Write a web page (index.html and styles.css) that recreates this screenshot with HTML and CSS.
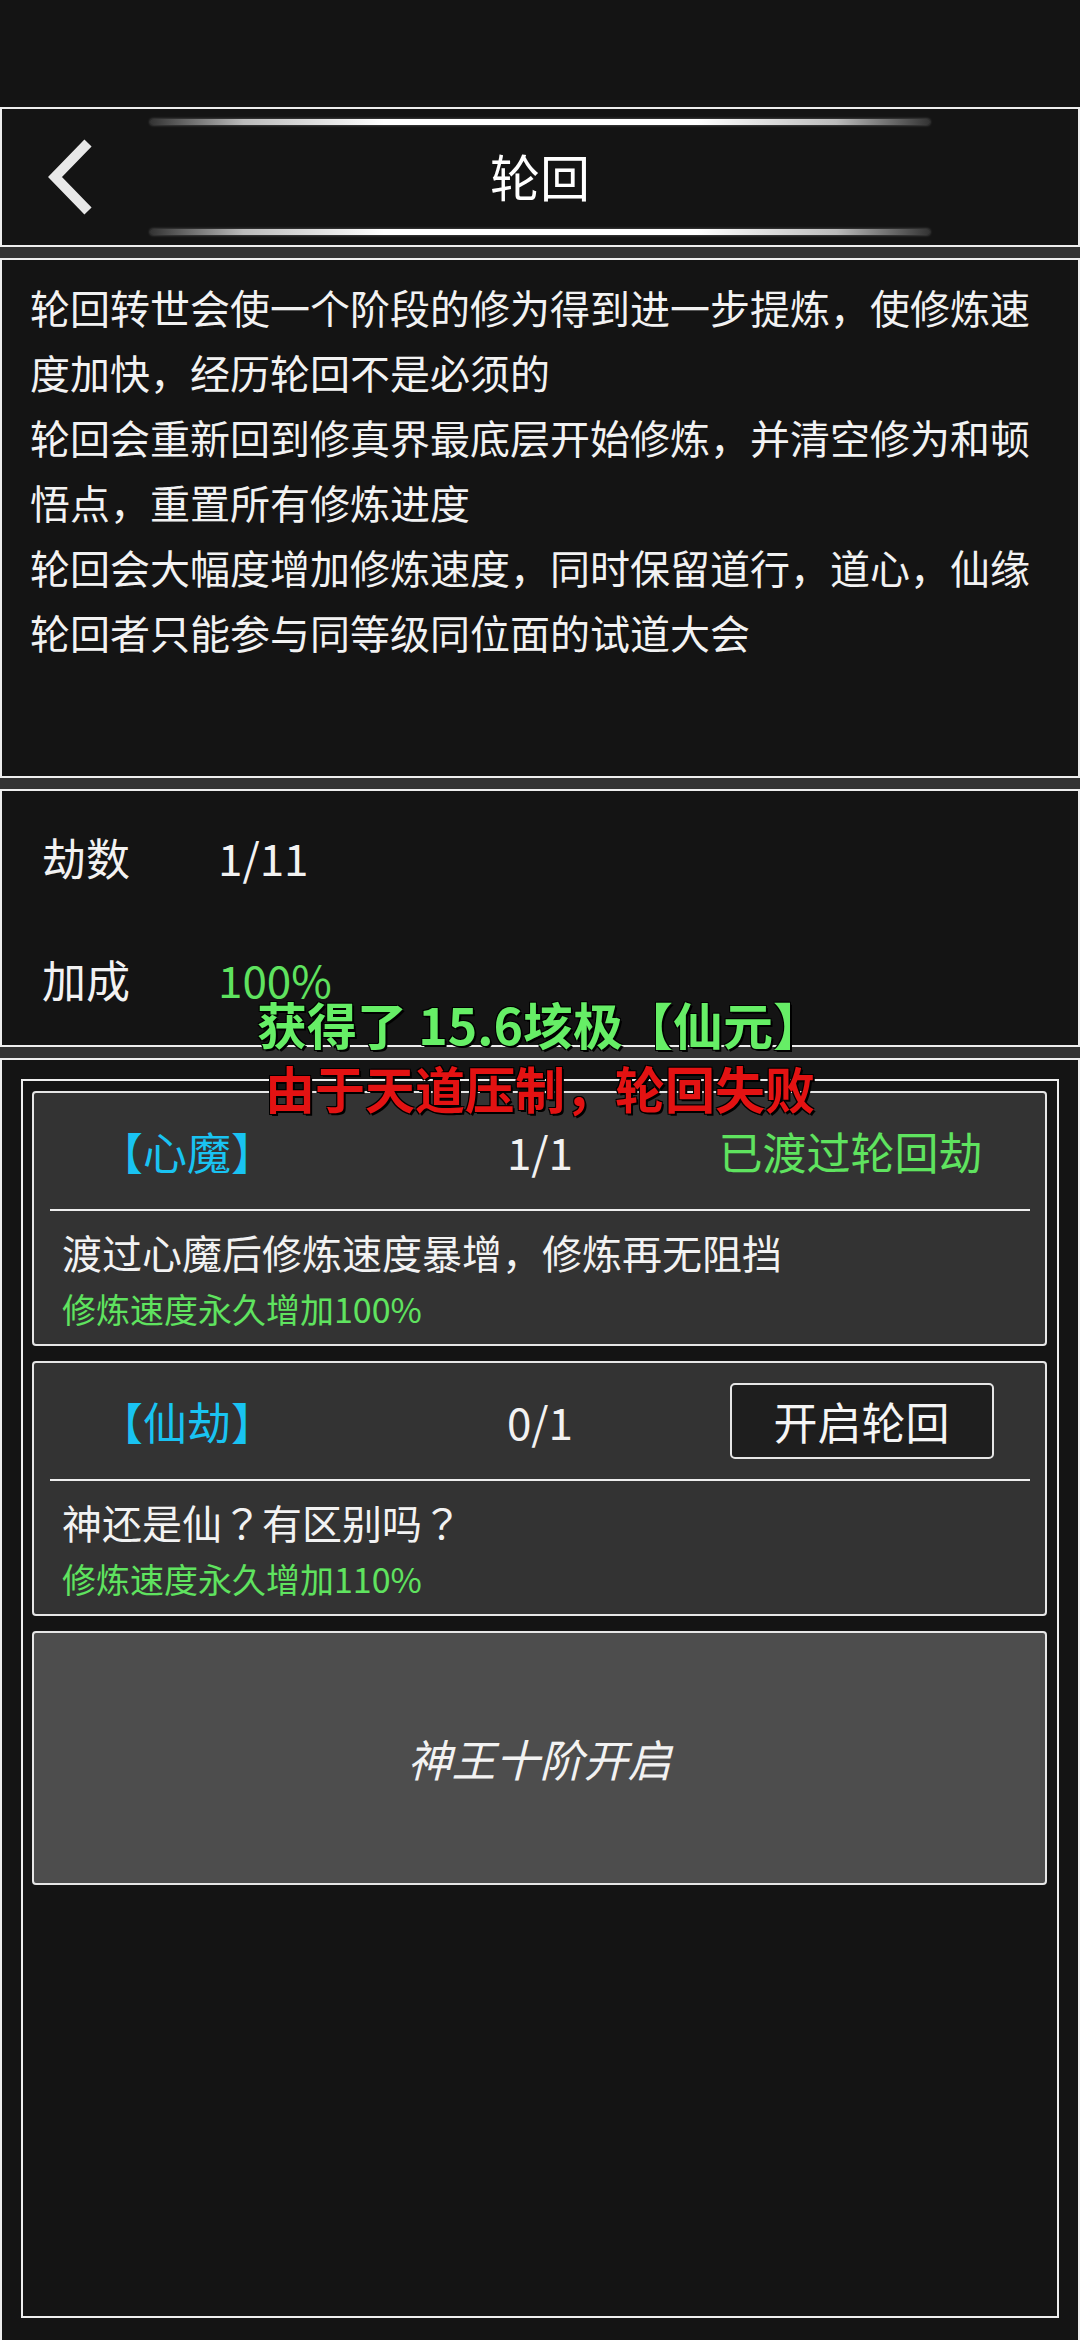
FILE: index.html
```html
<!DOCTYPE html>
<html>
<head>
    <meta charset="UTF-8">
    <meta name="viewport" content="width=device-width, initial-scale=1.0">
    <title>轮回</title>
    <link rel="stylesheet" href="styles.css">
</head>
<body>
    <div class="status-bar"></div>

    <div class="panel header">
        <div class="glow"></div>
        <div class="title-row">
            <svg class="back" width="48" height="76" viewBox="0 0 48 76">
                <polyline points="42,4 9,38 42,72" fill="none" stroke="#e8e8e8" stroke-width="10"/>
            </svg>
            <h1>轮回</h1>
            <span></span>
        </div>
        <div class="glow"></div>
    </div>

    <div class="panel intro">
        <p>轮回转世会使一个阶段的修为得到进一步提炼，使修炼速度加快，经历轮回不是必须的</p>
        <p>轮回会重新回到修真界最底层开始修炼，并清空修为和顿悟点，重置所有修炼进度</p>
        <p>轮回会大幅度增加修炼速度，同时保留道行，道心，仙缘</p>
        <p>轮回者只能参与同等级同位面的试道大会</p>
    </div>

    <div class="panel stats">
        <div class="stat">
            <span class="label">劫数</span>
            <span>1/11</span>
        </div>
        <div class="stat">
            <span class="label">加成</span>
            <span class="green">100%</span>
        </div>
    </div>

    <div class="panel list">
        <div class="frame">
            <div class="card">
                <div class="card-head">
                    <span class="name">【心魔】</span>
                    <span class="count">1/1</span>
                    <span class="done">已渡过轮回劫</span>
                </div>
                <div class="divider"></div>
                <div class="card-body">
                    <p class="desc">渡过心魔后修炼速度暴增，修炼再无阻挡</p>
                    <p class="bonus">修炼速度永久增加100%</p>
                </div>
            </div>

            <div class="card">
                <div class="card-head">
                    <span class="name">【仙劫】</span>
                    <span class="count">0/1</span>
                    <button class="start-btn">开启轮回</button>
                </div>
                <div class="divider"></div>
                <div class="card-body">
                    <p class="desc">神还是仙<span class="qmark">？</span>有区别吗<span class="qmark">？</span></p>
                    <p class="bonus">修炼速度永久增加110%</p>
                </div>
            </div>

            <div class="card locked">
                <span>神王十阶开启</span>
            </div>
        </div>
    </div>

    <div class="toast">
        <p class="toast-gain">获得了 15.6垓极【仙元】</p>
        <p class="toast-fail">由于天道压制，轮回失败</p>
    </div>
</body>
</html>
```

FILE: styles.css
```css
body {
    margin: 0;
    width: 1080px;
    height: 2340px;
    overflow: hidden;
    position: relative;
    background: #333333;
    font-family: "Noto Sans CJK SC", "Noto Sans", sans-serif;
    color: #f2f2f2;
}

p {
    margin: 0;
}

.status-bar {
    height: 107px;
    background: #141414;
}

.panel {
    box-sizing: border-box;
    background: #141414;
    border: 2px solid #eeeeee;
    margin-top: 11px;
}

.header {
    margin-top: 0;
    height: 140px;
    padding: 10px 0;
}

.glow {
    width: 780px;
    height: 6px;
    margin: 0 auto;
    border-radius: 3px;
    background: linear-gradient(90deg, #333 0%, #bbb 12%, #fff 30%, #fff 70%, #bbb 88%, #333 100%);
    box-shadow: 0 0 3px rgba(255, 255, 255, 0.35);
}

.title-row {
    height: 104px;
    display: grid;
    grid-template-columns: 1fr auto 1fr;
    align-items: center;
}

.back {
    margin-left: 44px;
    display: block;
}

.title-row h1 {
    margin: 0 0 5px 0;
    font-size: 50px;
    font-weight: normal;
    color: #ffffff;
}

.intro {
    height: 520px;
    padding: 15px 28px 0 28px;
    font-size: 40px;
    line-height: 65px;
}

.stats {
    height: 258px;
    padding-top: 5px;
    font-size: 44px;
}

.stat {
    height: 122px;
    display: flex;
    align-items: center;
}

.stat .label {
    width: 176px;
    padding-left: 40px;
}

.green {
    color: #5fe35f;
}

.list {
    height: 1290px;
    border-bottom: none;
    padding: 19px 19px 0 19px;
}

.frame {
    box-sizing: border-box;
    height: 1239px;
    border: 2px solid #eeeeee;
    padding: 10px 10px 0 9px;
    display: flex;
    flex-direction: column;
    gap: 15px;
}

.card {
    background: #333333;
    border: 2px solid #e6e6e6;
    border-radius: 4px;
}

.card-head {
    height: 116px;
    display: grid;
    grid-template-columns: 281px 320px 1fr;
    align-items: center;
    padding: 0 32px 0 65px;
    font-size: 44px;
}

.name {
    color: #19c3f2;
}

.count {
    justify-self: center;
}

.done {
    justify-self: center;
    margin-right: 12px;
    color: #5fe35f;
}

.start-btn {
    justify-self: center;
    margin-left: 10px;
    width: 264px;
    height: 76px;
    background: #1e1e1e;
    border: 2px solid #e6e6e6;
    border-radius: 5px;
    color: #f5f5f5;
    font-family: inherit;
    font-size: 44px;
    padding: 0;
}

.divider {
    height: 2px;
    margin: 0 15px 0 16px;
    background: #eeeeee;
}

.card-body {
    padding: 16px 28px 15px 28px;
}

.desc {
    font-size: 40px;
    line-height: 50px;
}

.qmark {
    font-family: "Noto Sans CJK JP", sans-serif;
}

.bonus {
    margin-top: 12px;
    font-size: 34px;
    line-height: 40px;
    color: #5fe35f;
}

.locked {
    height: 254px;
    box-sizing: border-box;
    background: #4d4d4d;
    display: flex;
    align-items: center;
    justify-content: center;
    font-size: 44px;
    font-style: italic;
}

.toast {
    position: absolute;
    top: 991px;
    left: 0;
    width: 1080px;
    text-align: center;
    font-size: 50px;
    font-weight: bold;
    line-height: 64px;
    text-shadow: 2px 2px 0 #000, -1px -1px 0 #000, 1px -1px 0 #000, -1px 1px 0 #000;
}

.toast-gain {
    color: #66ee66;
}

.toast-fail {
    color: #e31212;
}
```
